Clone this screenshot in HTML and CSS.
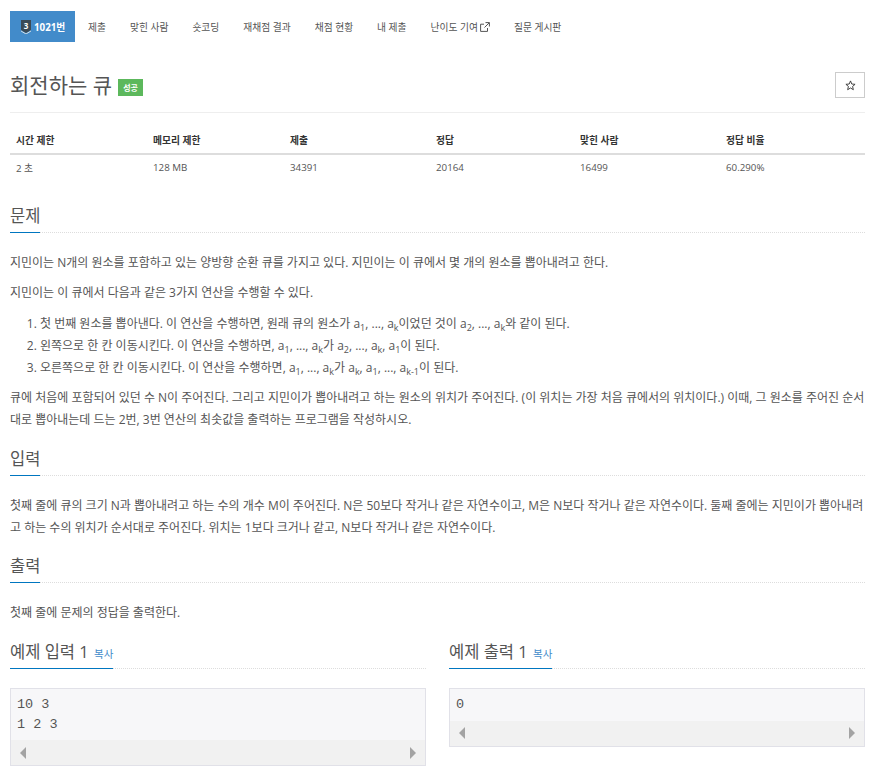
FILE: index.html
```html
<!DOCTYPE html>
<html lang="ko">
<head>
<meta charset="utf-8">
<title>회전하는 큐</title>
<link rel="stylesheet" href="styles.css">
</head>
<body>
<div class="page">
  <ul class="tabs">
    <li class="tab active"><span class="tier-wrap"><svg class="tier" viewBox="0 0 10 14" width="10" height="14"><path d="M0 0H10V10L5 13 0 10Z" fill="#3b4a55"/><path d="M0 11L5 14 10 11" fill="none" stroke="#dfe6ea" stroke-width=".9"/></svg><span class="tier-num">3</span></span>1021번</li>
    <li class="tab">제출</li>
    <li class="tab">맞힌 사람</li>
    <li class="tab">숏코딩</li>
    <li class="tab">재채점 결과</li>
    <li class="tab">채점 현황</li>
    <li class="tab">내 제출</li>
    <li class="tab">난이도 기여<svg class="ext" viewBox="0 0 10 10" width="10" height="10"><path d="M7.5 6V9.4H.6V2.2H4M5.5.6H9.4V4.5M9.2.8L4.5 5.5" fill="none" stroke="#555" stroke-width="1"/></svg></li>
    <li class="tab">질문 게시판</li>
  </ul>

  <div class="title-row">
    <h1 class="title">회전하는 큐<span class="badge">성공</span></h1>
    <button class="star" type="button"><svg viewBox="0 0 12 12" width="11" height="11"><path d="M6 1L7.4 4.4 11 4.7 8.3 7 9.1 10.6 6 8.7 2.9 10.6 3.7 7 1 4.7 4.6 4.4Z" fill="none" stroke="#333" stroke-width="1"/></svg></button>
  </div>

  <table class="info">
    <thead><tr><th class="c1">시간 제한</th><th class="c1">메모리 제한</th><th class="c2">제출</th><th class="c3">정답</th><th class="c2">맞힌 사람</th><th>정답 비율</th></tr></thead>
    <tbody><tr><td>2 초</td><td>128 MB</td><td>34391</td><td>20164</td><td>16499</td><td>60.290%</td></tr></tbody>
  </table>

  <section class="section first">
    <div class="head"><h2>문제</h2></div>
    <p>지민이는 N개의 원소를 포함하고 있는 양방향 순환 큐를 가지고 있다. 지민이는 이 큐에서 몇 개의 원소를 뽑아내려고 한다.</p>
    <p>지민이는 이 큐에서 다음과 같은 3가지 연산을 수행할 수 있다.</p>
    <ol>
      <li>첫 번째 원소를 뽑아낸다. 이 연산을 수행하면, 원래 큐의 원소가 <i>a<sub>1</sub>, ..., a<sub>k</sub></i>이었던 것이 <i>a<sub>2</sub>, ..., a<sub>k</sub></i>와 같이 된다.</li>
      <li>왼쪽으로 한 칸 이동시킨다. 이 연산을 수행하면, <i>a<sub>1</sub>, ..., a<sub>k</sub></i>가 <i>a<sub>2</sub>, ..., a<sub>k</sub>, a<sub>1</sub></i>이 된다.</li>
      <li>오른쪽으로 한 칸 이동시킨다. 이 연산을 수행하면, <i>a<sub>1</sub>, ..., a<sub>k</sub></i>가 <i>a<sub>k</sub>, a<sub>1</sub>, ..., a<sub>k-1</sub></i>이 된다.</li>
    </ol>
    <p>큐에 처음에 포함되어 있던 수 N이 주어진다. 그리고 지민이가 뽑아내려고 하는 원소의 위치가 주어진다. (이 위치는 가장 처음 큐에서의 위치이다.) 이때, 그 원소를 주어진 순서대로 뽑아내는데 드는 2번, 3번 연산의 최솟값을 출력하는 프로그램을 작성하시오.</p>
  </section>

  <section class="section">
    <div class="head"><h2>입력</h2></div>
    <p>첫째 줄에 큐의 크기 N과 뽑아내려고 하는 수의 개수 M이 주어진다. N은 50보다 작거나 같은 자연수이고, M은 N보다 작거나 같은 자연수이다. 둘째 줄에는 지민이가 뽑아내려고 하는 수의 위치가 순서대로 주어진다. 위치는 1보다 크거나 같고, N보다 작거나 같은 자연수이다.</p>
  </section>

  <section class="section tight">
    <div class="head"><h2>출력</h2></div>
    <p>첫째 줄에 문제의 정답을 출력한다.</p>
  </section>

  <div class="samples">
    <div class="sample">
      <div class="head"><h2>예제 입력 1 <a class="copy">복사</a></h2></div>
      <div class="code"><pre>10 3
1 2 3</pre>
        <div class="scrollbar"><span class="arrow left"></span><span class="arrow right"></span></div>
      </div>
    </div>
    <div class="sample">
      <div class="head"><h2>예제 출력 1 <a class="copy">복사</a></h2></div>
      <div class="code"><pre>0</pre>
        <div class="scrollbar"><span class="arrow left"></span><span class="arrow right"></span></div>
      </div>
    </div>
  </div>
</div>
</body>
</html>
```
FILE: styles.css
```css
* { box-sizing: border-box; }
html, body { margin: 0; padding: 0; background: #fff; overflow: hidden; }
body {
  font-family: "Open Sans", "Noto Sans CJK KR", sans-serif;
  font-size: 12px;
  color: #555;
  width: 875px;
  height: 776px;
}
.page { padding: 11px 10px 0; }

.tabs { display: flex; list-style: none; margin: 0; padding: 0; height: 31px; }
.tab { display: flex; align-items: center; gap: 2px; padding: 0 12px; font-size: 9.75px; color: #555; white-space: pre; }
.tab.active { background: #428bca; color: #fff; font-weight: 700; padding: 0 0 0 11px; width: 65px; gap: 3px; margin-right: 1px; }
.tier-wrap { position: relative; display: flex; width: 10px; height: 14px; }
.tier-num { position: absolute; left: 0; top: 0; width: 10px; line-height: 12px; text-align: center; font-size: 8px; color: #fff; }

.title-row { display: flex; justify-content: space-between; align-items: flex-start; height: 71px; padding-top: 30px; border-bottom: 1px solid #eee; }
.title { margin: 0; font-size: 21px; font-weight: 400; line-height: 26px; color: #555; display: flex; align-items: center; gap: 6px; white-space: pre; }
.badge { display: inline-block; background: #5cb85c; color: #fff; font-size: 8px; font-weight: 700; height: 17px; line-height: 17px; width: 25px; text-align: center; margin-top: 4px; }
.star { width: 30px; height: 26px; border: 1px solid #ccc; background: #fff; padding: 0; display: flex; align-items: center; justify-content: center; }

.info { width: 855px; border-collapse: collapse; table-layout: fixed; margin-top: 14px; font-size: 9.75px; }
.info th { text-align: left; font-weight: 700; color: #333; padding: 0 6px; height: 27px; border-bottom: 2px solid #ddd; }
.info td { padding: 0 6px; height: 26px; color: #555; }
.c1 { width: 137px; }
.c2 { width: 146px; }
.c3 { width: 144px; }

.section { margin-top: 15px; }
.section.first { margin-top: 23px; }
.section.tight { margin-top: 14px; }
.head { border-bottom: 1px dotted #ddd; height: 30px; }
.head h2 { display: inline-block; margin: 0; height: 30px; font-size: 16.5px; font-weight: 400; line-height: 26px; color: #555; border-bottom: 1px solid #0076c0; white-space: pre; }
.section p { margin: 0; line-height: 22px; padding-top: 8px; }
.section .head + p { padding-top: 19px; }
.section ol { margin: 9px 0 0; padding-left: 30px; line-height: 22px; }
.section ol li { height: 22px; }
i { font-style: normal; font-size: 12px; }
sub { font-size: 9px; line-height: 0; }

.samples { display: grid; grid-template-columns: 416px 416px; column-gap: 23px; margin-top: 15px; }
.copy { font-size: 10.5px; color: #428bca; margin-left: 1px; }
.code { margin-top: 19px; border: 1px solid #e1e1e8; background: #f7f7f9; }
.code pre { margin: 0; padding: 6px; font-family: "Liberation Mono", monospace; font-size: 13.5px; line-height: 19.5px; color: #555; }
.scrollbar { height: 25px; background: #f1f1f1; display: flex; justify-content: space-between; align-items: center; padding: 0 9px; }
.arrow { width: 0; height: 0; border-top: 6px solid transparent; border-bottom: 6px solid transparent; }
.arrow.left { border-right: 6px solid #a3a3a3; }
.arrow.right { border-left: 6px solid #a3a3a3; }
```
